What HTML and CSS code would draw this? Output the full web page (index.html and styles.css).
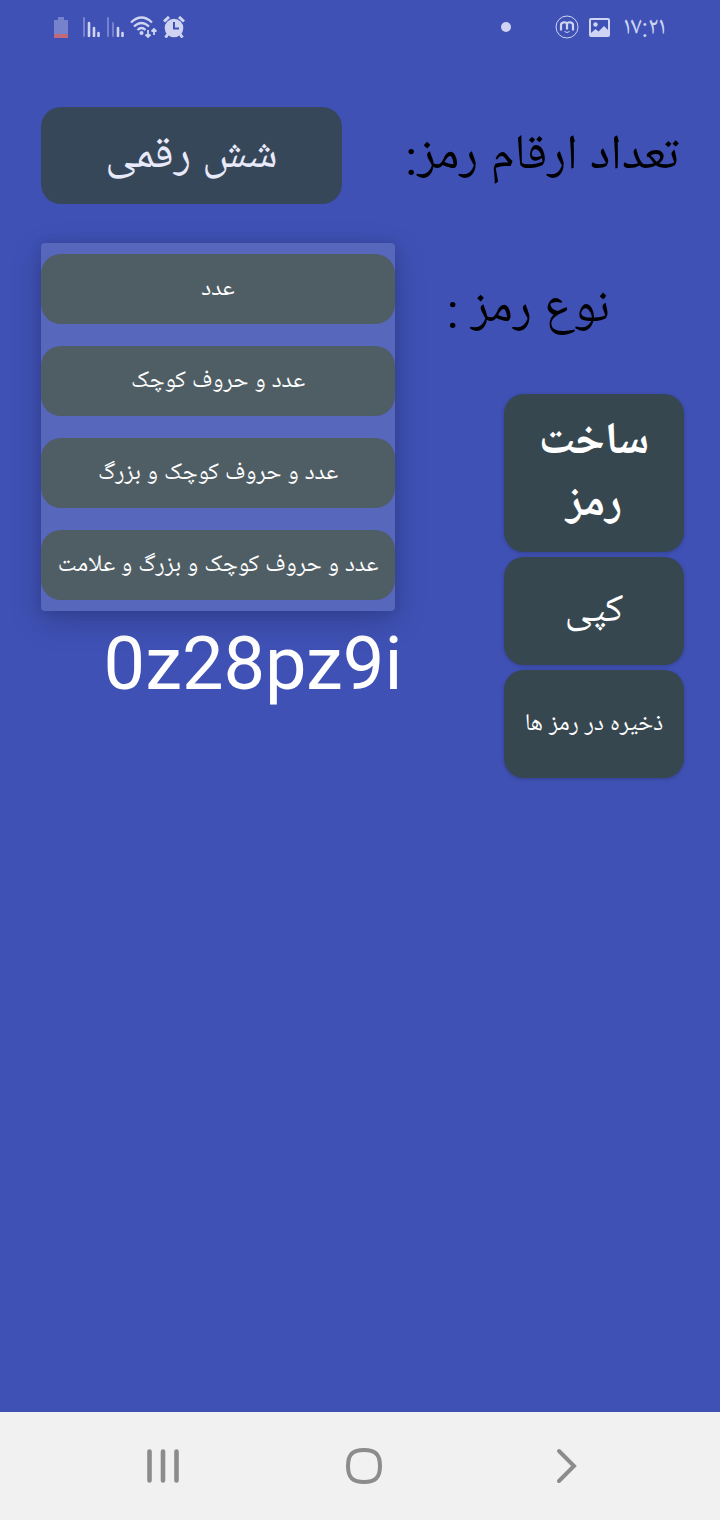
FILE: index.html
```html
<!DOCTYPE html>
<html lang="fa" dir="rtl">
<head>
<meta charset="utf-8">
<meta name="viewport" content="width=device-width, initial-scale=1">
<title>ساخت رمز</title>
<link rel="stylesheet" href="styles.css">
</head>
<body>
<div class="app">
  <header class="status" dir="ltr">
    <div class="status-group status-system">
      <svg class="icon-battery" width="14" height="22" viewBox="0 0 14 22"><path d="M4 1h6v3h4v14H0V4h4z" fill="#7682cb"/><path d="M0 18h14v4H0z" fill="#c0697a"/></svg>
      <svg width="18" height="20" viewBox="0 0 18 20" fill="none" stroke="#ced4f1" stroke-width="2.600" stroke-linecap="round"><path d="M2 1v18" stroke="#7682cb" stroke-width="2"/><path d="M7 6v13M12 11v8M16.500 16v3"/></svg>
      <svg width="18" height="20" viewBox="0 0 18 20" fill="none" stroke="#ced4f1" stroke-width="2.600" stroke-linecap="round"><path d="M2 1v18M7 6v13" stroke="#7682cb" stroke-width="2"/><path d="M12 11v8M16.500 16v3"/></svg>
      <svg width="27" height="22" viewBox="0 0 27 22" fill="none" stroke="#ced4f1" stroke-width="2.300"><path d="M1 6.500Q11.500-3.500 22 6.500M4 10.500q7.500-7 15 0M7.500 14q4-4 8 0"/><circle cx="11.500" cy="17" r="2" fill="#ced4f1" stroke="none"/><path d="M18 14v7M15.500 18.500l2.500 2.500 2.500-2.500M24 19v-6M21.500 15.500L24 13l2.500 2.500" stroke-width="1.800"/></svg>
      <svg width="22" height="22" viewBox="0 0 22 22"><circle cx="11" cy="12" r="9.300" fill="#ced4f1"/><path d="M1 5.500l5-4.500M21 5.500l-5-4.500M5 18l-2.500 3.500M17 18l2.500 3.500" stroke="#ced4f1" stroke-width="3"/><path d="M11 6v6.500h5" fill="none" stroke="#3f51b5" stroke-width="2"/></svg>
    </div>
    <div class="status-group">
      <svg class="icon-dot" width="10" height="10" viewBox="0 0 10 10"><circle cx="5" cy="5" r="5" fill="#ced4f1"/></svg>
      <svg width="24" height="24" viewBox="0 0 24 24" fill="none" stroke="#ced4f1"><circle cx="12" cy="12" r="11"/><path d="M6 15.500V10C6 7 11.500 6 12 9.500V14.500M12 9.500C12.500 6 18 7 18 10V15.500" stroke-width="2.200"/><path d="M9.500 16.500q2.500 2 5 0"/></svg>
      <svg width="21" height="20" viewBox="0 0 21 20"><path fill="#ced4f1" fill-rule="evenodd" d="M2 1h17a2 2 0 0 1 2 2v15a2 2 0 0 1-2 2H2a2 2 0 0 1-2-2V3a2 2 0 0 1 2-2zM2 3v13l4.500-4 3 2.500L15 9l4 4V3z"/><circle cx="6.500" cy="7.500" r="2.200" fill="#ced4f1"/></svg>
      <time class="clock">۱۷:۲۱</time>
    </div>
  </header>

  <main class="content">
    <div class="row">
      <label class="label" for="digits">تعداد ارقام رمز:</label>
      <select class="digits" id="digits"><option>شش رقمی</option></select>
    </div>

    <div class="row row-type">
      <span class="label" id="type-label">نوع رمز :</span>
      <div class="menu" role="group" aria-labelledby="type-label">
        <button class="menu-item" type="button">عدد</button>
        <button class="menu-item" type="button">عدد و حروف کوچک</button>
        <button class="menu-item" type="button">عدد و حروف کوچک و بزرگ</button>
        <button class="menu-item" type="button">عدد و حروف کوچک و بزرگ و علامت</button>
      </div>
    </div>

    <div class="workspace">
      <div class="actions">
        <button class="action action-main" type="button">ساخت رمز</button>
        <button class="action action-copy" type="button">کپی</button>
        <button class="action" type="button">ذخیره در رمز ها</button>
      </div>
      <output class="password" dir="ltr">0z28pz9i</output>
    </div>
  </main>

  <nav class="navbar" dir="ltr">
    <button class="nav-button" type="button" aria-label="Recents"><svg width="40" height="40" viewBox="0 0 40 40" stroke="#8c8c8c" stroke-width="4.600" stroke-linecap="round"><path d="M6.500 5.500v29M20 5.500v29M33.500 5.500v29"/></svg></button>
    <button class="nav-button" type="button" aria-label="Home"><svg width="40" height="40" viewBox="0 0 40 40" fill="none" stroke="#8c8c8c" stroke-width="4"><path d="M20 4C31 4 36 8 36 20S31 36 20 36 4 32 4 20 9 4 20 4z"/></svg></button>
    <button class="nav-button" type="button" aria-label="Back"><svg width="40" height="40" viewBox="0 0 40 40" fill="none" stroke="#8c8c8c" stroke-width="4" stroke-linecap="round"><path d="M14 5l15 15-15 15"/></svg></button>
  </nav>
</div>
</body>
</html>
```
FILE: styles.css
```css
* { box-sizing: border-box; }

body {
  margin: 0;
  font-family: Roboto, "Noto Naskh Arabic UI", "Noto Naskh Arabic", "DejaVu Sans", sans-serif;
  background: #3f51b5;
}

button, select {
  margin: 0;
  border: 0;
  font-family: inherit;
}

svg { display: block; flex: none; }

.app {
  display: flex;
  flex-direction: column;
  min-height: 100vh;
}

.status {
  display: flex;
  align-items: center;
  justify-content: space-between;
  height: 54px;
  padding: 0 54px;
}

.status-group {
  display: flex;
  align-items: center;
  gap: 10px;
}

.status-system { gap: 6px; }
.icon-battery { margin-right: 8px; }
.icon-dot { margin-right: 34px; }

.clock {
  margin-left: 3px;
  padding-top: 4px;
  color: #ced4f1;
  font-size: 25px;
  line-height: 24px;
}

.content {
  flex: 1;
  padding: 53px 36px 53px 41px;
}

.row {
  position: relative;
  display: flex;
  align-items: center;
  justify-content: space-between;
  margin-bottom: 39px;
}

.label {
  padding: 6px 0 0 5px;
  padding-right: 5px;
  color: #000;
  font-size: 49px;
  line-height: 60px;
  white-space: nowrap;
}

.digits {
  appearance: none;
  width: 301px;
  height: 97px;
  padding: 4px 0 0;
  border-radius: 20px;
  background: #37475a;
  color: #e8eaf9;
  font-size: 45px;
  text-align: center;
  text-align-last: center;
}

.row-type {
  align-items: flex-start;
  margin-bottom: 0;
  padding: 33px 69px 52px 0;
}

.menu {
  position: absolute;
  top: 0;
  left: 0;
  z-index: 1;
  display: flex;
  flex-direction: column;
  gap: 22px;
  width: 354px;
  padding: 11px 0;
  border-radius: 4px;
  background: #5767bc;
  box-shadow: 0 10px 32px rgba(0, 0, 0, 0.2), 0 0 12px rgba(0, 0, 0, 0.1);
}

.menu-item {
  height: 70px;
  padding: 0 0 2px;
  border-radius: 20px;
  background: #4f5d64;
  color: #fff;
  font-size: 24px;
  white-space: nowrap;
}

.workspace {
  display: flex;
  gap: 39px;
}

.actions {
  display: flex;
  flex: none;
  flex-direction: column;
  gap: 5px;
  width: 180px;
}

.action {
  min-height: 108px;
  padding: 0 16px 2px;
  border-radius: 20px;
  background: #37474f;
  box-shadow: 0 1px 4px rgba(0, 0, 0, 0.2);
  color: #fff;
  font-size: 24px;
  white-space: nowrap;
}

.action-main {
  min-height: 158px;
  padding: 4px 32px 0;
  font-size: 45px;
  font-weight: 700;
  line-height: 62px;
  white-space: normal;
}

.action-copy { font-size: 40px; }

.password {
  flex: 1;
  padding-top: 226px;
  color: #fff;
  font-family: Roboto, sans-serif;
  font-size: 74px;
  line-height: 88px;
  text-align: center;
}

.navbar {
  display: flex;
  align-items: center;
  justify-content: center;
  gap: 161px;
  height: 108px;
  padding-left: 8px;
  background: #f1f1f1;
}

.nav-button {
  padding: 0;
  background: none;
}
```
